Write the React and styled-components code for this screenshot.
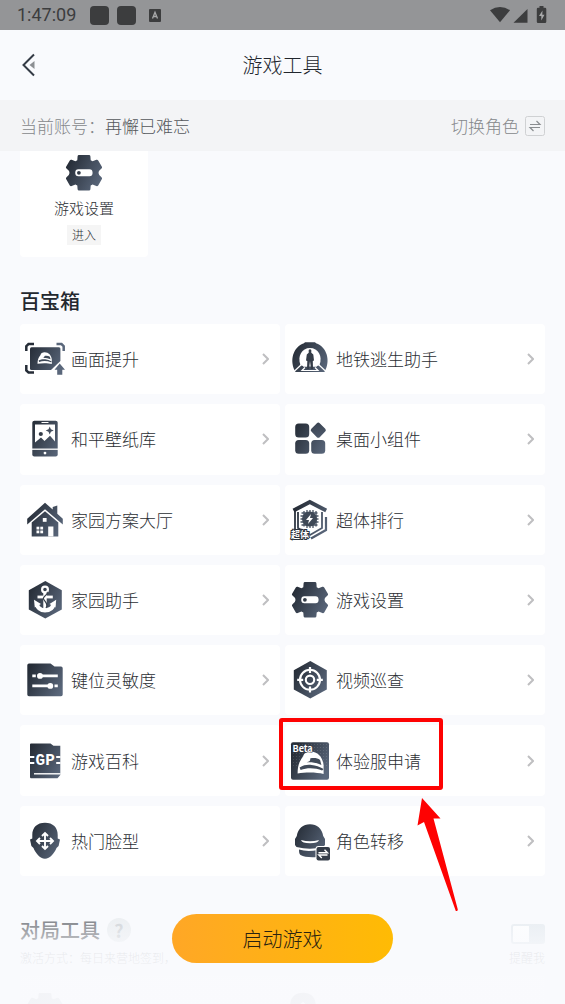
import React from 'react';
//Styles
import styled, { createGlobalStyle } from 'styled-components';

const GlobalStyle = createGlobalStyle`
  * {
    box-sizing: border-box;
    margin: 0;
    padding: 0;
  }
  body {
    background: #f9fafd;
    color: #2b2e33;
    font-family: 'Noto Sans CJK SC', sans-serif;
    font-weight: 300;
  }
  a {
    color: inherit;
    text-decoration: none;
  }
  button {
    border: none;
    background: none;
    color: inherit;
    font-family: inherit;
    font-weight: inherit;
    cursor: pointer;
  }
`;

//Shared fills for every tool icon
const IconDefs = () => (
  <HiddenSvg aria-hidden="true">
    <defs>
      <linearGradient
        id="ink"
        gradientUnits="userSpaceOnUse"
        x1="4"
        y1="10"
        x2="38"
        y2="28"
      >
        <stop offset="0" stopColor="#262d37" />
        <stop offset="1" stopColor="#5a677b" />
      </linearGradient>
      <pattern id="mesh" width="3" height="3" patternUnits="userSpaceOnUse">
        <rect width="1" height="1" fill="#fff" opacity="0.12" />
      </pattern>
    </defs>
  </HiddenSvg>
);

const hexagon = 'M20.3 1 L36.8 10.2 V29.4 L20.3 38.6 L3.8 29.4 V10.2 Z';

//Helmet is drawn on a 26 x 23 area
const Helmet = () => (
  <g>
    <path
      d="M0 22 C0 15 1.500 10 5.500 5 C6 2 9 0 13 0 C20 0 25.500 6 26 14 V22.500 C19 20.500 8 20.500 0 22 Z"
      fill="#fff"
    />
    <path
      d="M9 10.800 C12 10 13 9 12.500 7 C16 6 20 6.500 22.500 8.500 L23.800 13.500 C19 11 14 10.500 9 10.800 Z"
      fill="#414b59"
    />
    <path
      d="M2 16 C6 13.500 10 13 14 13.500 C18 14 22 15.200 26 17.500 L24.500 19 C18 16.500 10 16 3 18.500 Z"
      fill="#414b59"
    />
  </g>
);

//Icons
const icons = {
  quality: (
    <>
      <g fill="none" strokeWidth="2.500">
        <path d="M9 5 H3.500 L1.300 7.200 V12" stroke="#262d37" />
        <path d="M1.300 26 V31.500 L3.500 33.400 H9" stroke="#262d37" />
        <path d="M31.500 5 H36.500 L38.700 7.200 V12" stroke="#5a677b" />
      </g>
      <path
        d="M6.500 8.300 H34 Q35.400 8.300 35.400 9.800 V22 L26 31 H6.500 Q5 31 5 29.500 V9.800 Q5 8.300 6.500 8.300 Z"
        fill="url(#ink)"
      />
      <g transform="translate(12.500 13.300) scale(0.550 0.520)">
        <Helmet />
      </g>
      <path
        d="M34.700 24.500 L40 30.700 H37.300 V35.800 H32.200 V30.700 H29.500 Z"
        fill="#5a677b"
      />
    </>
  ),
  metro: (
    <>
      <path
        d="M5.500 33 C-1 22 3 8 14 4.300 L15 3.300 H25 L26 4.300 C37 8 41 22 34.500 33 Z"
        fill="url(#ink)"
      />
      <path
        d="M10.500 26 C7 17 12 9 20 9 C28 9 33 17 29.500 26 L26 27.500 H14 Z"
        fill="#fff"
      />
      <path
        d="M18.700 11 Q20 9.600 21.300 11 V13.800 L23.300 15.500 L24 21.500 L22.800 22 L23 30 H21 L20 22 L19 30 H17 L17.300 22 L16 21.500 L16.800 15.500 L18.700 13.800 Z"
        fill="#343c48"
      />
      <path
        d="M11.500 25.500 L3.500 33 M28.500 25.500 L36.500 33 M17 27 H13 M23 27 H27 M15 28.500 L12 31.500 H28 L25 28.500"
        stroke="#fff"
        strokeWidth="1.200"
        fill="none"
      />
    </>
  ),
  wallpaper: (
    <>
      <rect x="7.300" y="1.800" width="25.400" height="35.800" rx="2" fill="url(#ink)" />
      <path
        d="M10 5.500 H30 V22.500 L25 16.800 L19.500 22 L16 18.500 L10 23.500 Z"
        fill="#fff"
      />
      <circle cx="15.800" cy="15" r="2.100" fill="#343c48" />
      <path
        d="M24.700 7.500 L25.900 10.300 L28.700 11.500 L25.900 12.700 L24.700 15.500 L23.500 12.700 L20.700 11.500 L23.500 10.300 Z"
        fill="#434d5c"
      />
      <path d="M16.500 3.500 H23.500" stroke="#fff" strokeWidth="1" />
      <path d="M7 30.200 H33" stroke="#fff" strokeWidth="1.300" />
      <circle cx="20" cy="34.100" r="1.400" fill="#fff" />
    </>
  ),
  widget: (
    <g fill="url(#ink)">
      <rect x="5.200" y="4.500" width="14" height="14" rx="3.500" />
      <rect x="5.200" y="21" width="14" height="13.800" rx="3.500" />
      <rect x="21.200" y="21" width="14" height="13.800" rx="3.500" />
      <rect
        x="22.400"
        y="5.300"
        width="11.800"
        height="11.800"
        rx="2"
        transform="rotate(45 28.300 11.200)"
      />
    </g>
  ),
  house: (
    <>
      <path
        d="M20 2.800 L27.700 9.600 V7 L32.300 5.500 V13.800 L37.800 18.800 V24.500 L20 9.300 L2.200 24.500 V18.800 Z"
        fill="url(#ink)"
      />
      <path d="M20 11.200 L33.300 22.600 V36.500 H6.700 V22.600 Z" fill="url(#ink)" />
      <g fill="#fff">
        <rect x="17.800" y="18" width="3.800" height="3.800" />
        <rect x="23.200" y="26.500" width="5.200" height="10" />
        <rect x="11.500" y="26.700" width="2.800" height="2.800" />
        <rect x="15.300" y="26.700" width="2.800" height="2.800" />
        <rect x="11.500" y="30.500" width="2.800" height="2.800" />
        <rect x="15.300" y="30.500" width="2.800" height="2.800" />
      </g>
    </>
  ),
  anchor: (
    <>
      <path d={hexagon} fill="url(#ink)" />
      <g fill="none" stroke="#fff">
        <circle cx="20" cy="9.500" r="2.900" strokeWidth="2.200" />
        <path d="M20 12 V31" strokeWidth="3.400" />
        <path d="M12.500 17 H27.800" strokeWidth="2.800" />
        <path
          d="M11.800 24 C13 29 16.500 30.300 20 30.300 C23.500 30.300 27.500 29 28.500 24"
          strokeWidth="4.200"
        />
      </g>
      <path
        d="M9 19.800 L16 24 L9.800 27.500 Z M31.200 19.800 L24.500 24 L30.500 27.500 Z"
        fill="#fff"
      />
      <path
        d="M22 12 C24 14 17 17 18.500 19 C20 22 24 24 21 28"
        fill="none"
        stroke="#343c48"
        strokeWidth="1.200"
      />
    </>
  ),
  rank: (
    <>
      <path
        d="M3.500 10.500 L19.800 2 L36.200 10.500"
        fill="none"
        stroke="url(#ink)"
        strokeWidth="4"
      />
      <path
        d="M5 10 V30 M8 12 V28 L20 35 L32 28 V12"
        fill="none"
        stroke="url(#ink)"
        strokeWidth="1.800"
      />
      <path
        d="M36 17 V30 L21 38.500"
        fill="none"
        stroke="url(#ink)"
        strokeWidth="2.200"
      />
      <path
        d="M14 11 V26.500 M17 10 V28 M20 10 V28 M23 10 V28 M26 11 V26.500 M11.500 13 H27.500 M10.500 16 H28.500 M10.500 19 H28.500 M10.500 22 H28.500 M11.500 25 H27.500"
        stroke="#4a5565"
        strokeWidth="1.300"
      />
      <circle cx="19.500" cy="19" r="7.500" fill="#3f4957" />
      <path d="M21 14 L16 20 H19 L18 24 L23 18 H20 Z" fill="#fff" />
      <text
        x="1"
        y="38"
        fontFamily="'Noto Sans CJK SC', sans-serif"
        fontSize="9"
        fontWeight="700"
        fill="#fff"
        stroke="#2b323d"
        strokeWidth="2"
        paintOrder="stroke"
      >
        超体
      </text>
    </>
  ),
  gear: (
    <>
      <path
        d="M15 2 H25 Q26.300 2 26.400 3.300 L26.700 7.200 L28.600 8.300 L32.300 6.800 Q33.500 6.300 34.200 7.400 L37.900 13.700 Q38.500 14.800 37.500 15.600 Q34.500 17.800 34.500 20 Q34.500 22.200 37.500 24.200 Q38.500 25 37.900 26.100 L34.200 32.400 Q33.500 33.500 32.300 33 L28.600 31.500 L26.700 32.600 L26.400 36.300 Q26.300 37.600 25 37.600 H15 Q13.700 37.600 13.600 36.300 L13.300 32.600 L11.400 31.500 L7.700 33 Q6.500 33.500 5.800 32.400 L2.100 26.100 Q1.500 25 2.500 24.200 Q5.500 22.200 5.500 20 Q5.500 17.800 2.500 15.600 Q1.500 14.800 2.100 13.700 L5.800 7.400 Q6.500 6.300 7.700 6.800 L11.400 8.300 L13.300 7.200 L13.600 3.300 Q13.700 2 15 2 Z"
        fill="url(#ink)"
      />
      <rect x="11.300" y="16.300" width="17.200" height="7" rx="3" fill="#fff" />
      <circle cx="14.900" cy="19.800" r="1.900" fill="#343c48" />
    </>
  ),
  slider: (
    <>
      <path
        d="M4 3.500 H25.500 L29.500 6.500 H36 Q37.700 6.500 37.700 8.200 V34.500 Q37.700 36.200 36 36.200 H4 Q2.300 36.200 2.300 34.500 V5.200 Q2.300 3.500 4 3.500 Z"
        fill="url(#ink)"
      />
      <g stroke="#fff" strokeWidth="2.600">
        <path d="M7.300 15.900 H10.800 M12.500 15.900 H32.800 M7.300 25.900 H27 M29.500 25.900 H32.800" />
      </g>
      <circle cx="15" cy="15.900" r="2.900" fill="#fff" />
      <circle cx="25.300" cy="25.900" r="2.900" fill="#fff" />
    </>
  ),
  aim: (
    <>
      <path d={hexagon} fill="url(#ink)" />
      <g fill="none" stroke="#fff">
        <circle cx="20" cy="19.800" r="10" strokeWidth="2.100" />
        <circle cx="20" cy="19.800" r="4.200" strokeWidth="2.100" />
        <path
          d="M20 7 V13 M20 26.600 V32.600 M7.200 19.800 H13.200 M26.800 19.800 H32.800"
          strokeWidth="2.200"
        />
      </g>
    </>
  ),
  wiki: (
    <>
      <path
        d="M6 2.500 H25.500 L28.500 4.800 H35.300 V34 L32.500 37.200 H6 Q5 37.200 5 36 V3.500 Q5 2.500 6 2.500 Z"
        fill="url(#ink)"
      />
      <path
        d="M5 16 H9.300 M5 22 H9.300 M31.200 16 H35.500 M31.200 22 H35.500"
        stroke="#fff"
        strokeWidth="2.200"
      />
      <path d="M9 32.800 H35.500" stroke="#fff" strokeWidth="1.400" />
      <text
        x="20.200"
        y="24.300"
        textAnchor="middle"
        fontFamily="'Liberation Mono', monospace"
        fontSize="16"
        fontWeight="700"
        fill="#fff"
      >
        GP
      </text>
    </>
  ),
  beta: (
    <>
      <rect x="1" y="1.200" width="38" height="37.600" rx="2" fill="url(#ink)" />
      <rect x="1" y="1.200" width="38" height="24" fill="url(#mesh)" />
      <g transform="translate(7.600 10.500)">
        <Helmet />
      </g>
      <text
        x="2.500"
        y="11.400"
        fontFamily="'Noto Sans CJK SC', sans-serif"
        fontSize="9"
        fontWeight="700"
        fill="#fff"
        stroke="#343c48"
        strokeWidth="1"
        paintOrder="stroke"
      >
        Beta
      </text>
    </>
  ),
  face: (
    <>
      <path
        d="M7.300 17.500 V14 C7.300 6.500 12 1.700 20 1.700 C28 1.700 32.700 6.500 32.700 14 V17.500 L35 18.500 L33.600 25 L31.500 27 C29.500 32 25 37.700 20 37.700 C15 37.700 10.500 32 8.500 27 L6.400 25 L5 18.500 Z"
        fill="url(#ink)"
      />
      <path
        d="M20 12.500 V27.500 M12.500 20 H27.500 M17 15 L20 12 L23 15 M17 25 L20 28 L23 25 M15 17 L12 20 L15 23 M25 17 L28 20 L25 23"
        fill="none"
        stroke="#fff"
        strokeWidth="1.900"
      />
    </>
  ),
  transfer: (
    <>
      <path
        d="M6.800 15 C8 7.500 13 3.300 20 3.300 C27 3.300 32 7.500 33.200 15 L35 18 V24 L33 26 Q20 29.500 6.500 26 L5 24 V18 Z"
        fill="url(#ink)"
      />
      <path
        d="M11 19 Q20 21.500 29 19 Q28 22.300 20 22.300 Q12 22.300 11 19 Z"
        fill="#fff"
      />
      <path
        d="M9 28.500 Q17 31 28 29 V36 Q16 37 10.500 34 Q9 33 9 28.500 Z"
        fill="url(#ink)"
      />
      <rect x="25.500" y="25" width="15" height="15" rx="3" fill="#fff" />
      <rect x="26.500" y="26" width="13.500" height="13.500" rx="2" fill="#343c48" />
      <path
        d="M28.500 31.700 H37.500 L34.500 28.700 M37.500 34 H28.800 L31.800 37"
        fill="none"
        stroke="#fff"
        strokeWidth="1.400"
      />
    </>
  ),
};

const ToolIcon = ({ name }) => (
  <IconSvg viewBox="0 0 40 40" aria-hidden="true">
    {icons[name]}
  </IconSvg>
);

const tools = [
  { name: '画面提升', icon: 'quality' },
  { name: '地铁逃生助手', icon: 'metro' },
  { name: '和平壁纸库', icon: 'wallpaper' },
  { name: '桌面小组件', icon: 'widget' },
  { name: '家园方案大厅', icon: 'house' },
  { name: '超体排行', icon: 'rank' },
  { name: '家园助手', icon: 'anchor' },
  { name: '游戏设置', icon: 'gear' },
  { name: '键位灵敏度', icon: 'slider' },
  { name: '视频巡查', icon: 'aim' },
  { name: '游戏百科', icon: 'wiki' },
  { name: '体验服申请', icon: 'beta', marked: true },
  { name: '热门脸型', icon: 'face' },
  { name: '角色转移', icon: 'transfer' },
];

const Tool = ({ tool }) => (
  <ToolLink href="#">
    <ToolIcon name={tool.icon} />
    <ToolName>{tool.name}</ToolName>
    <Chevron viewBox="0 0 8 12" aria-hidden="true">
      <path d="M2 1 L7 6 L2 11" fill="none" stroke="#bfbfc1" strokeWidth="2" />
    </Chevron>
    {tool.marked && (
      <>
        <MarkBox />
        <MarkArrow viewBox="0 0 42 114" aria-hidden="true">
          <path
            d="M5 0 L23.500 20.500 L16.500 20.500 L40.800 111.500 Q40.800 113.500 38.800 113 L7 24 L0.500 27.500 Z"
            fill="#fe0202"
          />
        </MarkArrow>
      </>
    )}
  </ToolLink>
);

const StatusBar = () => (
  <Status>
    <Clock>1:47:09</Clock>
    <Notices>
      <Notice />
      <Notice />
    </Notices>
    <KeyboardSvg viewBox="0 0 12 13" aria-hidden="true">
      <rect width="12" height="13" rx="1" fill="#3c3d3e" />
      <path
        d="M3.500 9.500 L6 3.300 L8.500 9.500 M4.300 7.500 H7.700"
        fill="none"
        stroke="#a8a9aa"
        strokeWidth="1.300"
      />
    </KeyboardSvg>
    <StatusSvg viewBox="0 0 57 18" aria-hidden="true">
      <g fill="#3c3d3e">
        <path d="M0 4.300 Q10 -2.500 20 4.300 L10 16.300 Z" />
        <path d="M37.500 3 V16.800 H23.500 Z" />
        <path d="M49.500 0 H53.500 V1.700 H55 Q56.300 1.700 56.300 3 V15.800 Q56.300 17 55 17 H48 Q46.800 17 46.800 15.800 V3 Q46.800 1.700 48 1.700 H49.500 Z" />
      </g>
      <path d="M52.500 4.500 L49 10 H51.300 V14.500 L54.500 8.800 H52.300 Z" fill="#a8a9aa" />
    </StatusSvg>
  </Status>
);

const App = () => {
  return (
    <Page>
      <GlobalStyle />
      <IconDefs />
      <StatusBar />
      <Header>
        <BackButton aria-label="返回">
          <svg width="13" height="24" viewBox="0 0 13 24">
            <path d="M12 1.500 L1.500 12 L12 22.500" fill="none" stroke="#343b45" strokeWidth="2" />
            <path d="M12.500 8 V16 L7.500 12 Z" fill="#8c8f93" />
          </svg>
        </BackButton>
        <Title>游戏工具</Title>
      </Header>
      <Account>
        <p>
          当前账号：<strong>再懈已难忘</strong>
        </p>
        <SwitchRole>
          切换角色
          <svg width="20" height="20" viewBox="0 0 20 20" aria-hidden="true">
            <rect x="0.500" y="0.500" width="19" height="19" rx="2" fill="none" stroke="#cfd1d3" />
            <path
              d="M5 8.500 H15 L11.500 5 M15 11.500 H5 L8.500 15"
              fill="none"
              stroke="#8a8d90"
              strokeWidth="1.200"
            />
          </svg>
        </SwitchRole>
      </Account>
      <Content>
        <PinnedCard href="#">
          <ToolIcon name="gear" />
          <PinnedName>游戏设置</PinnedName>
          <Enter>进入</Enter>
        </PinnedCard>
        <SectionTitle>百宝箱</SectionTitle>
        <ToolGrid>
          {tools.map((tool) => (
            <Tool key={tool.name} tool={tool} />
          ))}
        </ToolGrid>
        <MatchHead>
          <div>
            <MatchTitle>
              对局工具
              <Help aria-label="说明">?</Help>
            </MatchTitle>
            <Hint>激活方式：每日来营地签到，</Hint>
          </div>
          <Remind>
            <Toggle type="checkbox" />
            提醒我
          </Remind>
        </MatchHead>
        <MatchGrid>
          <ToolIcon name="gear" />
          <ToolIcon name="face" />
        </MatchGrid>
      </Content>
      {/* Fades the list out behind the start button */}
      <Footer>
        <StartButton>启动游戏</StartButton>
      </Footer>
    </Page>
  );
};

const Page = styled.div`
  position: relative;
  display: flex;
  flex-direction: column;
  height: 100vh;
  overflow: hidden;
`;
const HiddenSvg = styled.svg`
  position: absolute;
  width: 0;
  height: 0;
`;
const Status = styled.div`
  display: flex;
  align-items: center;
  flex-shrink: 0;
  height: 30px;
  padding: 0 18px 0 17px;
  background: #949597;
`;
const Clock = styled.span`
  color: #3c3d3e;
  font-family: Roboto, sans-serif;
  font-size: 18px;
  font-weight: 400;
  line-height: 20px;
`;
const Notices = styled.div`
  display: flex;
  gap: 8px;
  margin: 0 13px 0 14px;
`;
const Notice = styled.i`
  width: 19px;
  height: 19px;
  border-radius: 4px;
  background: #3c3d3e;
`;
const KeyboardSvg = styled.svg`
  width: 12px;
  height: 13px;
`;
const StatusSvg = styled.svg`
  width: 57px;
  height: 18px;
  margin-left: auto;
`;
const Header = styled.header`
  display: grid;
  grid-template-columns: 60px 1fr 60px;
  align-items: center;
  flex-shrink: 0;
  height: 70px;
`;
const BackButton = styled.button`
  display: flex;
  padding-left: 22px;
`;
const Title = styled.h1`
  color: #22262d;
  font-size: 20px;
  font-weight: 300;
  line-height: 30px;
  text-align: center;
`;
const Account = styled.div`
  display: flex;
  align-items: center;
  justify-content: space-between;
  flex-shrink: 0;
  height: 51px;
  padding: 0 20px;
  background: #f3f4f6;
  color: #85888b;
  font-size: 17px;
  line-height: 30px;
  strong {
    color: #54575b;
    font-weight: 300;
  }
`;
const SwitchRole = styled.button`
  display: flex;
  align-items: center;
  gap: 6px;
  font-size: 17px;
`;
const Content = styled.main`
  flex: 1;
  padding: 0 20px;
  overflow-y: auto;
  scrollbar-width: none;
`;
const PinnedCard = styled.a`
  display: flex;
  flex-direction: column;
  align-items: center;
  width: 128px;
  padding: 2px 0 12px;
  border-radius: 0 0 4px 4px;
  background: #fff;
`;
const IconSvg = styled.svg`
  flex-shrink: 0;
  width: 40px;
  height: 40px;
  overflow: visible;
`;
const PinnedName = styled.span`
  margin: 4px 0 6px;
  font-size: 15px;
  line-height: 22px;
`;
const Enter = styled.span`
  padding: 0 5px;
  background: #f5f5f5;
  font-size: 12px;
  line-height: 20px;
`;
const SectionTitle = styled.h2`
  margin: 29px 0 8px;
  color: #24282f;
  font-size: 20px;
  font-weight: 500;
  line-height: 30px;
`;
const ToolGrid = styled.div`
  display: grid;
  grid-template-columns: 1fr 1fr;
  grid-auto-rows: 1fr;
  gap: 10px 5px;
  height: 552px;
`;
const ToolLink = styled.a`
  position: relative;
  display: flex;
  align-items: center;
  gap: 6px;
  padding: 0 11px 0 5px;
  border-radius: 4px;
  background: #fff;
`;
const ToolName = styled.span`
  flex: 1;
  font-size: 17px;
  line-height: 30px;
`;
const Chevron = styled.svg`
  width: 8px;
  height: 12px;
`;
const MarkBox = styled.i`
  position: absolute;
  z-index: 3;
  top: -7px;
  left: -6px;
  width: 164px;
  height: 72px;
  border: 4px solid #fe0202;
  border-radius: 3px;
`;
const MarkArrow = styled.svg`
  position: absolute;
  z-index: 3;
  top: 73px;
  left: 132px;
  width: 42px;
  height: 114px;
`;
const MatchHead = styled.div`
  display: flex;
  align-items: flex-end;
  justify-content: space-between;
  margin: 39px 0 8px;
`;
const MatchTitle = styled.h2`
  display: flex;
  align-items: center;
  gap: 7px;
  color: #24282f;
  font-size: 20px;
  font-weight: 500;
  line-height: 30px;
`;
const Help = styled.button`
  width: 24px;
  height: 24px;
  border-radius: 50%;
  background: #e3e7ea;
  color: #b4babf;
  font-size: 18px;
  font-weight: 700;
  line-height: 24px;
`;
const Hint = styled.p`
  margin-top: 3px;
  color: #6b6f74;
  font-size: 12px;
  line-height: 20px;
`;
const Remind = styled.label`
  display: flex;
  flex-direction: column;
  align-items: flex-end;
  gap: 4px;
  color: #6b6f74;
  font-size: 12px;
  line-height: 20px;
`;
const Toggle = styled.input`
  appearance: none;
  width: 34px;
  height: 20px;
  border: 2px solid #dde4ea;
  border-right-width: 16px;
  border-radius: 3px;
  background: #fff;
`;
const MatchGrid = styled.div`
  display: grid;
  grid-template-columns: 1fr 1fr;
  height: 70px;
  padding: 15px 5px;
  background: #fff;
`;
const Footer = styled.footer`
  position: absolute;
  z-index: 2;
  right: 0;
  bottom: 0;
  left: 0;
  display: flex;
  justify-content: center;
  padding: 14px 0 41px;
  background: linear-gradient(
    rgba(249, 250, 253, 0.1) 0,
    rgba(249, 250, 253, 0.45) 20px,
    rgba(249, 250, 253, 0.7) 40px,
    rgba(249, 250, 253, 0.88) 54px,
    rgba(249, 250, 253, 0.97) 90px
  );
  pointer-events: none;
`;
const StartButton = styled.button`
  width: 221px;
  height: 49px;
  border-radius: 25px;
  background: linear-gradient(90deg, #ffa726, #ffbb04);
  color: #2a2210;
  font-size: 20px;
  line-height: 30px;
  pointer-events: auto;
`;

export default App;
